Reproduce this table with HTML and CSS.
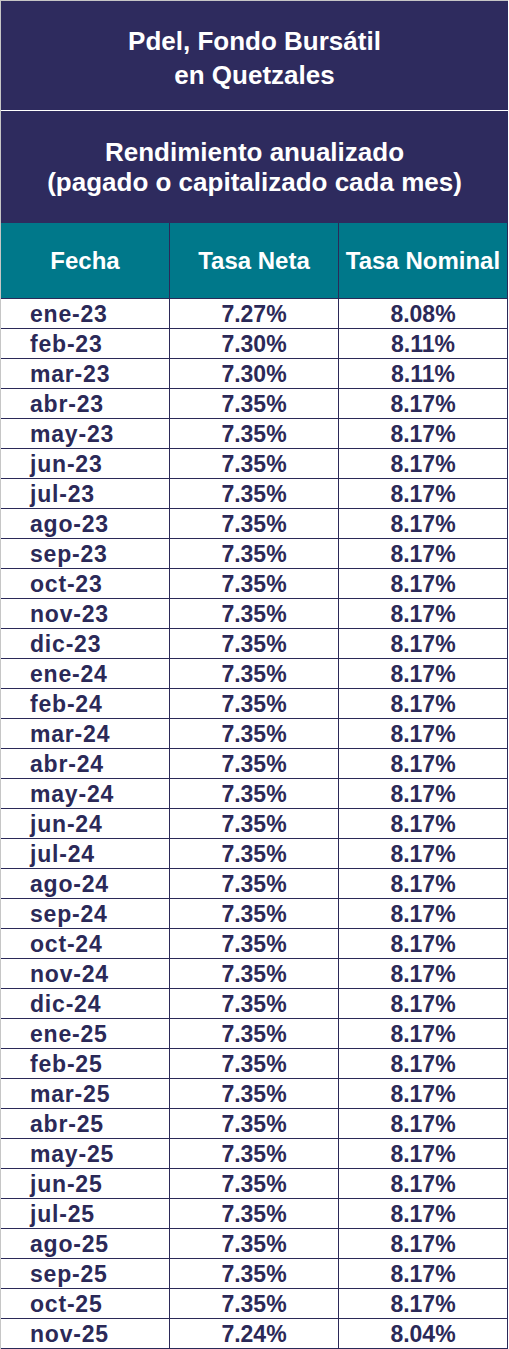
FILE: index.html
```html
<!DOCTYPE html>
<html lang="es">
<head>
<meta charset="utf-8">
<title>Pdel, Fondo Bursátil en Quetzales</title>
<link rel="stylesheet" href="styles.css">
</head>
<body>
<div class="sheet">
  <div class="title">Pdel, Fondo Bursátil<br>en Quetzales</div>
  <div class="subtitle">Rendimiento anualizado<br>(pagado o capitalizado cada mes)</div>
  <div class="row head">
    <div class="cell">Fecha</div>
    <div class="cell">Tasa Neta</div>
    <div class="cell">Tasa Nominal</div>
  </div>
  <div class="row"><div class="cell date">ene-23</div><div class="cell">7.27%</div><div class="cell">8.08%</div></div>
  <div class="row"><div class="cell date">feb-23</div><div class="cell">7.30%</div><div class="cell">8.11%</div></div>
  <div class="row"><div class="cell date">mar-23</div><div class="cell">7.30%</div><div class="cell">8.11%</div></div>
  <div class="row"><div class="cell date">abr-23</div><div class="cell">7.35%</div><div class="cell">8.17%</div></div>
  <div class="row"><div class="cell date">may-23</div><div class="cell">7.35%</div><div class="cell">8.17%</div></div>
  <div class="row"><div class="cell date">jun-23</div><div class="cell">7.35%</div><div class="cell">8.17%</div></div>
  <div class="row"><div class="cell date">jul-23</div><div class="cell">7.35%</div><div class="cell">8.17%</div></div>
  <div class="row"><div class="cell date">ago-23</div><div class="cell">7.35%</div><div class="cell">8.17%</div></div>
  <div class="row"><div class="cell date">sep-23</div><div class="cell">7.35%</div><div class="cell">8.17%</div></div>
  <div class="row"><div class="cell date">oct-23</div><div class="cell">7.35%</div><div class="cell">8.17%</div></div>
  <div class="row"><div class="cell date">nov-23</div><div class="cell">7.35%</div><div class="cell">8.17%</div></div>
  <div class="row"><div class="cell date">dic-23</div><div class="cell">7.35%</div><div class="cell">8.17%</div></div>
  <div class="row"><div class="cell date">ene-24</div><div class="cell">7.35%</div><div class="cell">8.17%</div></div>
  <div class="row"><div class="cell date">feb-24</div><div class="cell">7.35%</div><div class="cell">8.17%</div></div>
  <div class="row"><div class="cell date">mar-24</div><div class="cell">7.35%</div><div class="cell">8.17%</div></div>
  <div class="row"><div class="cell date">abr-24</div><div class="cell">7.35%</div><div class="cell">8.17%</div></div>
  <div class="row"><div class="cell date">may-24</div><div class="cell">7.35%</div><div class="cell">8.17%</div></div>
  <div class="row"><div class="cell date">jun-24</div><div class="cell">7.35%</div><div class="cell">8.17%</div></div>
  <div class="row"><div class="cell date">jul-24</div><div class="cell">7.35%</div><div class="cell">8.17%</div></div>
  <div class="row"><div class="cell date">ago-24</div><div class="cell">7.35%</div><div class="cell">8.17%</div></div>
  <div class="row"><div class="cell date">sep-24</div><div class="cell">7.35%</div><div class="cell">8.17%</div></div>
  <div class="row"><div class="cell date">oct-24</div><div class="cell">7.35%</div><div class="cell">8.17%</div></div>
  <div class="row"><div class="cell date">nov-24</div><div class="cell">7.35%</div><div class="cell">8.17%</div></div>
  <div class="row"><div class="cell date">dic-24</div><div class="cell">7.35%</div><div class="cell">8.17%</div></div>
  <div class="row"><div class="cell date">ene-25</div><div class="cell">7.35%</div><div class="cell">8.17%</div></div>
  <div class="row"><div class="cell date">feb-25</div><div class="cell">7.35%</div><div class="cell">8.17%</div></div>
  <div class="row"><div class="cell date">mar-25</div><div class="cell">7.35%</div><div class="cell">8.17%</div></div>
  <div class="row"><div class="cell date">abr-25</div><div class="cell">7.35%</div><div class="cell">8.17%</div></div>
  <div class="row"><div class="cell date">may-25</div><div class="cell">7.35%</div><div class="cell">8.17%</div></div>
  <div class="row"><div class="cell date">jun-25</div><div class="cell">7.35%</div><div class="cell">8.17%</div></div>
  <div class="row"><div class="cell date">jul-25</div><div class="cell">7.35%</div><div class="cell">8.17%</div></div>
  <div class="row"><div class="cell date">ago-25</div><div class="cell">7.35%</div><div class="cell">8.17%</div></div>
  <div class="row"><div class="cell date">sep-25</div><div class="cell">7.35%</div><div class="cell">8.17%</div></div>
  <div class="row"><div class="cell date">oct-25</div><div class="cell">7.35%</div><div class="cell">8.17%</div></div>
  <div class="row"><div class="cell date">nov-25</div><div class="cell">7.24%</div><div class="cell">8.04%</div></div>
</div>
</body>
</html>
```
FILE: styles.css
```css
* { box-sizing: border-box; }
html, body { margin: 0; padding: 0; background: #ffffff; }
body { font-family: "Liberation Sans", Arial, sans-serif; font-weight: bold; }

.sheet {
  width: 508px;
  border-top: 1px solid #c6c6c6;
  border-left: 1px solid #c6c6c6;
}

.title {
  width: 507px;
  height: 110px;
  background: #2e2b5e;
  color: #ffffff;
  font-size: 26px;
  line-height: 34px;
  text-align: center;
  padding-top: 23px;
  border-bottom: 1px solid #ffffff;
}

.subtitle {
  width: 507px;
  height: 112px;
  background: #2e2b5e;
  color: #ffffff;
  font-size: 26px;
  line-height: 30px;
  text-align: center;
  padding-top: 26px;
}

.row {
  display: grid;
  grid-template-columns: 169px 169px 169px;
  width: 507px;
  height: 30px;
}

.cell {
  border-right: 1px solid #2b2958;
  border-bottom: 1px solid #2b2958;
  display: flex;
  align-items: center;
  justify-content: center;
  color: #2b2958;
  font-size: 23px;
  padding-top: 2px;
}

.cell.date {
  justify-content: flex-start;
  padding-left: 29px;
  letter-spacing: 0.8px;
}

.row.head {
  height: 76px;
  background: #00788a;
}

.row.head .cell {
  color: #ffffff;
  font-size: 24px;
  padding-top: 0;
}
```
